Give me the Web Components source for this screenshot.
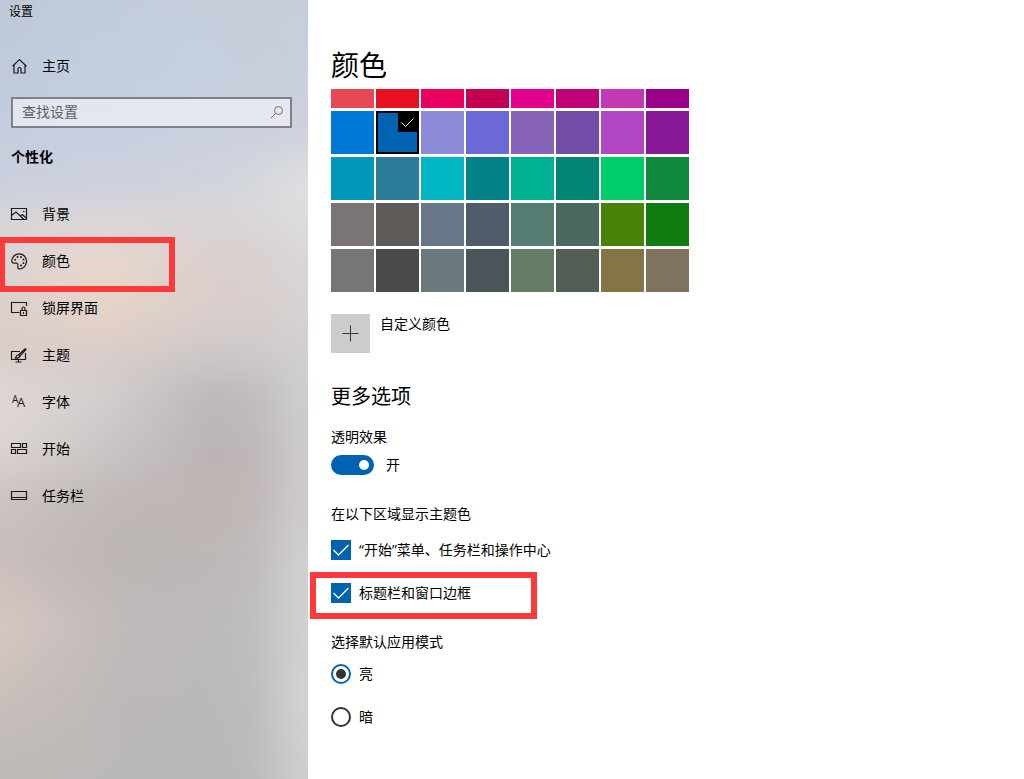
<!DOCTYPE html>
<html lang="zh-CN">
<head>
<meta charset="utf-8">
<meta name="viewport" content="width=device-width, initial-scale=1">
<title>设置</title>
<style>
  body {
    margin: 0;
    background: #fff;
    color: #000;
    font-family: "Open Sans", "Noto Sans CJK SC", sans-serif;
    font-size: 14px;
    line-height: 20px;
  }
</style>
</head>
<body>
<settings-app>
  <settings-sidebar slot="sidebar" title-text="设置">
    <nav-item icon="home">主页</nav-item>
    <search-box placeholder="查找设置"></search-box>
    <h2>个性化</h2>
    <nav-item slot="nav" icon="picture">背景</nav-item>
    <nav-item slot="nav" icon="palette" marked>颜色</nav-item>
    <nav-item slot="nav" icon="lock">锁屏界面</nav-item>
    <nav-item slot="nav" icon="theme">主题</nav-item>
    <nav-item slot="nav" icon="fonts">字体</nav-item>
    <nav-item slot="nav" icon="start">开始</nav-item>
    <nav-item slot="nav" icon="taskbar">任务栏</nav-item>
  </settings-sidebar>

  <settings-page heading="颜色">
    <color-palette selected="#0063b1"></color-palette>
    <custom-color>自定义颜色</custom-color>
    <settings-section heading="更多选项">
      <toggle-switch label="透明效果" checked>开</toggle-switch>
    </settings-section>
    <option-group label="在以下区域显示主题色">
      <check-option checked>“开始”菜单、任务栏和操作中心</check-option>
      <check-option checked marked>标题栏和窗口边框</check-option>
    </option-group>
    <radio-group label="选择默认应用模式" options="亮,暗" value="亮"></radio-group>
  </settings-page>
</settings-app>

<script>
const ICONS = {
  home: `<path d="M1.500 8.200 8.500 1.500 15.500 8.200M3 7V15H7V10.500Q7 9.500 8.500 9.500T10 10.500V15H14V7"/>`,
  picture: `<path d="M.5 2.500h15v11H.5zM.5 9.500 5 6l8 7.500M9 10.500l2.500-2 4 4"/><path d="M12 5.500h1.500"/>`,
  palette: `<path d="M.8 8.600C.6 4 4.200.8 8.200.8c4.200 0 7.300 3.300 7.300 7.500 0 4.400-3.200 7.500-6.400 7.700-1.900.1-2.600-1-2.300-2.600.3-1.500.2-2.800-1-3.300C4.100 9.600 2.600 11.600.8 8.600z"/>
    <g class="fill"><circle cx="4.200" cy="6.800" r="1"/><circle cx="6.500" cy="4" r="1"/><circle cx="10" cy="4" r="1"/><circle cx="12.500" cy="6.500" r="1"/><circle cx="12.500" cy="10" r="1"/><circle cx="10" cy="12.500" r="1"/></g>`,
  lock: `<path d="M8.500 12.500H.5v-10h15V6M9.500 10.500h6v5h-6zM11 10.500V9q0-2 1.500-2T14 9v1.500"/><path d="M12.500 12v2"/>`,
  theme: `<path d="M9 4.500H.5v8h14V6M7.500 12.500v2.500M4.500 15h6"/><path d="M15 2.500 9 9l-1.500-1L13.500 2.200q1.500-.7 1.500.3zM7.500 8q-2-.2-2.300 1.500T3.500 11q4.500.8 5.500-2"/>`,
  start: `<path d="M.5 2.500h9v4h-9zM11.500 2.500h4v4h-4zM.5 8.500h4v4h-4zM6.500 8.500h9v4h-9z"/>`,
  taskbar: `<path d="M.5 3.500h15v8H.5zM.5 9.500h15"/>`,
  fonts: `<text x="1" y="9" font-size="10">A</text><text x="6" y="13" font-size="13">A</text>`
};

// Red frame laid over a marked row
const MARK_STYLE = `
  :host([marked]) { position: relative; }
  :host([marked])::after {
    content: "";
    position: absolute;
    inset: var(--mark-inset);
    width: var(--mark-width);
    box-sizing: border-box;
    border: 6px solid #fd3a39;
    pointer-events: none;
  }
`;

class SettingsApp extends HTMLElement {
  constructor() {
    super();
    this.attachShadow({ mode: 'open' });
    this.shadowRoot.innerHTML = `
      <style>
        :host {
          display: grid;
          grid-template-columns: 308px minmax(0, 1fr);
          min-height: 100vh;
        }
      </style>
      <slot name="sidebar"></slot>
      <slot></slot>
    `;
  }
}

// Blurred wallpaper: vertical gradients blended from left to right
class AcrylicBackdrop extends HTMLElement {
  constructor() {
    super();
    this.attachShadow({ mode: 'open' });
  }

  connectedCallback() {
    const rows = [4, 11, 19, 26, 29, 35, 41, 46, 51, 57, 63, 70, 78, 87, 96];
    const columns = [
      { x: 8, colors: ['#bfc8d8', '#bfcadb', '#c5cddf', '#cbd0de', '#d7d5d9', '#dcd4d3', '#dccfcc', '#dacdc9', '#e0d9d6', '#dcd5d2', '#cdc4c2', '#c9bebb', '#d6c8c3', '#c9bfbb', '#bebab7'] },
      { x: 38, colors: ['#c3ccdb', '#c2cede', '#c7cfdf', '#ced1de', '#dad5d8', '#e9d7cb', '#e5d3c7', '#d8ccc9', '#d2cdcd', '#cac5c5', '#c0b9b8', '#bcb6b5', '#c1bbba', '#beb9b8', '#bbb9b8'] },
      { x: 65, colors: ['#c6cedc', '#c5cfde', '#cbd0de', '#d1d3dd', '#d9d5d8', '#dacfcd', '#d9cecc', '#cdc7c7', '#bbb8ba', '#bcb4b4', '#bfb5b4', '#bdb8b7', '#bcb9b9', '#bab8b8', '#b9b8b7'] },
      { x: 77, colors: ['#c7cedb', '#c6cedc', '#ccd0dd', '#d6d8dd', '#dad7d9', '#dacfcd', '#d9cecc', '#cdc8c9', '#bfbbbd', '#bfb7b7', '#c0b7b6', '#c0bbbb', '#bfbdbd', '#bdbcbc', '#bbbaba'] },
      { x: 90, colors: ['#c8cdda', '#c8cedb', '#cdd1dc', '#e0e0e2', '#dddcdd', '#d9d6d7', '#d6d2d2', '#d1ced0', '#cfcdd0', '#cccacb', '#cdcacb', '#d1cfd0', '#d2d1d2', '#d3d3d4', '#cecece'] }
    ];

    const layers = columns.map((col, i) => {
      const stops = col.colors.map((c, n) => `${c} ${rows[n]}%`).join(', ');
      const mask = i ? `linear-gradient(90deg, transparent ${columns[i - 1].x}%, #000 ${col.x}%)` : 'none';
      return `<div style="background: linear-gradient(${stops}); -webkit-mask-image: ${mask}; mask-image: ${mask}"></div>`;
    });

    this.shadowRoot.innerHTML = `
      <style>
        :host { position: absolute; inset: 0; z-index: -1; overflow: hidden; }
        section { position: absolute; inset: -30px; filter: blur(12px); }
        div { position: absolute; inset: 0; }
      </style>
      <section>${layers.join('')}</section>
    `;
  }
}

class SettingsSidebar extends HTMLElement {
  constructor() {
    super();
    this.attachShadow({ mode: 'open' });
  }

  connectedCallback() {
    this.shadowRoot.innerHTML = `
      <style>
        :host {
          display: block;
          position: relative;
          z-index: 0;
          padding-top: 4px;
        }
        header {
          margin: 0 9px 23px;
          font-size: 12px;
          line-height: 16px;
        }
        ::slotted(h2) {
          margin: 19px 11px 24px;
          font-size: 14px;
          font-weight: 700;
          line-height: 20px;
        }
        nav { display: flex; flex-direction: column; }
      </style>
      <acrylic-backdrop></acrylic-backdrop>
      <header>${this.getAttribute('title-text')}</header>
      <slot></slot>
      <nav><slot name="nav"></slot></nav>
    `;
  }
}

class NavItem extends HTMLElement {
  constructor() {
    super();
    this.attachShadow({ mode: 'open' });
  }

  connectedCallback() {
    this.shadowRoot.innerHTML = `
      <style>
        :host {
          display: block;
          --mark-inset: -1px auto -7px -1px;
          --mark-width: 176px;
        }
        a {
          display: flex;
          align-items: center;
          gap: 14px;
          height: 46px;
          padding: 0 11px 1px;
          color: inherit;
          text-decoration: none;
        }
        svg {
          flex: none;
          width: 17px;
          height: 17px;
          overflow: visible;
          fill: none;
          stroke: #1c1c1c;
          stroke-width: 1.2;
        }
        .fill, text { fill: #1c1c1c; stroke: none; }
        ${MARK_STYLE}
      </style>
      <a href="#${this.getAttribute('icon')}">
        <svg viewBox="0 0 17 17" aria-hidden="true">${ICONS[this.getAttribute('icon')]}</svg>
        <slot></slot>
      </a>
    `;
  }
}

class SearchBox extends HTMLElement {
  constructor() {
    super();
    this.attachShadow({ mode: 'open' });
  }

  connectedCallback() {
    const placeholder = this.getAttribute('placeholder') || '';
    this.shadowRoot.innerHTML = `
      <style>
        :host { display: block; margin: 7px 16px 0 11px; }
        label {
          display: flex;
          align-items: center;
          height: 31px;
          box-sizing: border-box;
          padding: 0 6px 2px 9px;
          border: 2px solid #7d818c;
          background: rgba(255, 255, 255, 0.5);
        }
        input {
          flex: 1;
          min-width: 0;
          padding: 0;
          border: 0;
          outline: none;
          background: none;
          color: #000;
          font: inherit;
        }
        input::placeholder { color: #5d6067; opacity: 1; }
        svg { width: 14px; height: 14px; fill: none; stroke: #6f737b; }
      </style>
      <label>
        <input type="text" placeholder="${placeholder}" aria-label="${placeholder}">
        <svg viewBox="0 0 14 14" aria-hidden="true"><circle cx="8.500" cy="5.500" r="4"/><path d="M5.500 8.500 1 13"/></svg>
      </label>
    `;
  }
}

class SettingsPage extends HTMLElement {
  constructor() {
    super();
    this.attachShadow({ mode: 'open' });
  }

  connectedCallback() {
    this.shadowRoot.innerHTML = `
      <style>
        :host { display: block; padding: 47px 23px 40px; }
        h1 {
          margin: 0 0 6px;
          font-size: 28px;
          font-weight: 400;
          line-height: 36px;
        }
      </style>
      <main>
        <h1>${this.getAttribute('heading')}</h1>
        <slot></slot>
      </main>
    `;
  }
}

class ColorPalette extends HTMLElement {
  constructor() {
    super();
    this.attachShadow({ mode: 'open' });
    this.colors = [
      '#e74856', '#e81123', '#ea005e', '#c30052', '#e3008c', '#bf0077', '#c239b3', '#9a0089',
      '#0078d7', '#0063b1', '#8e8cd8', '#6b69d6', '#8764b8', '#744da9', '#b146c2', '#881798',
      '#0099bc', '#2d7d9a', '#00b7c3', '#038387', '#00b294', '#018574', '#00cc6a', '#10893e',
      '#7a7574', '#5d5a58', '#68768a', '#515c6b', '#567c73', '#486860', '#498205', '#107c10',
      '#767676', '#4c4a48', '#69797e', '#4a5459', '#647c64', '#525e54', '#847545', '#7e735f'
    ];
  }

  connectedCallback() {
    const selected = this.getAttribute('selected');
    this.shadowRoot.innerHTML = `
      <style>
        :host { display: block; }
        .grid {
          display: grid;
          grid-template-columns: repeat(8, 43px);
          grid-template-rows: 19px;
          grid-auto-rows: 43px;
          gap: 3px 2px;
        }
        label { display: grid; background: var(--swatch); }
        input { appearance: none; margin: 0; grid-area: 1 / 1; }
        svg { display: none; }
        input:checked { border: 2px solid #000; }
        input:checked + svg {
          display: block;
          grid-area: 1 / 1;
          justify-self: end;
          width: 21px;
          height: 21px;
          background: #000;
          fill: none;
          stroke: #fff;
        }
      </style>
      <div class="grid" role="radiogroup">
        ${this.colors.map(c => `
          <label style="--swatch: ${c}">
            <input type="radio" name="accent" value="${c}" aria-label="${c}" ${c === selected ? 'checked' : ''}>
            <svg viewBox="0 0 21 21" aria-hidden="true"><path d="M3.500 11.500 7.500 15.500 15.500 7.500"/></svg>
          </label>`).join('')}
      </div>
    `;
  }
}

class CustomColor extends HTMLElement {
  constructor() {
    super();
    this.attachShadow({ mode: 'open' });
    this.shadowRoot.innerHTML = `
      <style>
        :host { display: block; margin-top: 22px; }
        button {
          display: flex;
          align-items: flex-start;
          gap: 10px;
          padding: 0;
          border: 0;
          background: none;
          color: inherit;
          font: inherit;
        }
        svg { width: 39px; height: 39px; background: #ccc; stroke: #333; }
      </style>
      <button type="button">
        <svg viewBox="0 0 39 39" aria-hidden="true"><path d="M11.500 19.500h16M19.500 11.500v16"/></svg>
        <slot></slot>
      </button>
    `;
  }
}

class SettingsSection extends HTMLElement {
  constructor() {
    super();
    this.attachShadow({ mode: 'open' });
  }

  connectedCallback() {
    this.shadowRoot.innerHTML = `
      <style>
        :host { display: block; margin-top: 30px; }
        h2 {
          margin: 0 0 16px;
          font-size: 20px;
          font-weight: 400;
          line-height: 28px;
        }
      </style>
      <h2>${this.getAttribute('heading')}</h2>
      <slot></slot>
    `;
  }
}

class ToggleSwitch extends HTMLElement {
  constructor() {
    super();
    this.attachShadow({ mode: 'open' });
  }

  connectedCallback() {
    this.shadowRoot.innerHTML = `
      <style>
        :host { display: flex; flex-direction: column; gap: 8px; }
        .row { display: flex; align-items: center; gap: 12px; }
        input {
          appearance: none;
          display: flex;
          align-items: center;
          width: 43px;
          height: 20px;
          box-sizing: border-box;
          margin: 0;
          padding: 0 5px;
          border: 2px solid #333;
          border-radius: 10px;
        }
        input::before {
          content: "";
          width: 10px;
          height: 10px;
          border-radius: 50%;
          background: #333;
        }
        input:checked {
          justify-content: flex-end;
          padding: 0 3px;
          border-color: #0063b1;
          background: #0063b1;
        }
        input:checked::before { background: #fff; }
      </style>
      <label for="switch">${this.getAttribute('label')}</label>
      <div class="row">
        <input id="switch" type="checkbox" role="switch" ${this.hasAttribute('checked') ? 'checked' : ''}>
        <slot></slot>
      </div>
    `;
  }
}

class OptionGroup extends HTMLElement {
  constructor() {
    super();
    this.attachShadow({ mode: 'open' });
  }

  connectedCallback() {
    this.shadowRoot.innerHTML = `
      <style>
        :host { display: block; margin-top: 29px; }
        .options {
          display: flex;
          flex-direction: column;
          align-items: flex-start;
          gap: 23px;
          margin-top: 16px;
        }
      </style>
      <div id="title">${this.getAttribute('label')}</div>
      <div class="options" role="group" aria-labelledby="title"><slot></slot></div>
    `;
  }
}

class CheckOption extends HTMLElement {
  constructor() {
    super();
    this.attachShadow({ mode: 'open' });
  }

  connectedCallback() {
    this.shadowRoot.innerHTML = `
      <style>
        :host {
          display: block;
          --mark-inset: -11px auto -16px -21px;
          --mark-width: 227px;
        }
        label { display: flex; align-items: center; gap: 8px; }
        .box { display: grid; width: 20px; height: 20px; }
        input {
          appearance: none;
          grid-area: 1 / 1;
          margin: 0;
          border: 2px solid #333;
        }
        input:checked { border-color: #0063b1; background: #0063b1; }
        svg {
          display: none;
          grid-area: 1 / 1;
          fill: none;
          stroke: #fff;
          stroke-width: 1.3;
          pointer-events: none;
        }
        input:checked + svg { display: block; }
        ${MARK_STYLE}
      </style>
      <label>
        <span class="box">
          <input type="checkbox" ${this.hasAttribute('checked') ? 'checked' : ''}>
          <svg viewBox="0 0 20 20" aria-hidden="true"><path d="M2.500 10 7.500 15 17.500 5"/></svg>
        </span>
        <slot></slot>
      </label>
    `;
  }
}

class RadioGroup extends HTMLElement {
  constructor() {
    super();
    this.attachShadow({ mode: 'open' });
  }

  connectedCallback() {
    const options = (this.getAttribute('options') || '').split(',');
    const value = this.getAttribute('value');
    this.shadowRoot.innerHTML = `
      <style>
        :host { display: block; margin-top: 29px; }
        .options {
          display: flex;
          flex-direction: column;
          align-items: flex-start;
          gap: 23px;
          margin-top: 12px;
        }
        label { display: flex; align-items: center; gap: 8px; }
        input {
          appearance: none;
          display: grid;
          place-items: center;
          width: 20px;
          height: 20px;
          box-sizing: border-box;
          margin: 0;
          border: 2px solid #333;
          border-radius: 50%;
        }
        input:checked { border-color: #0063b1; }
        input:checked::before {
          content: "";
          width: 10px;
          height: 10px;
          border-radius: 50%;
          background: #333;
        }
      </style>
      <div id="title">${this.getAttribute('label')}</div>
      <div class="options" role="radiogroup" aria-labelledby="title">
        ${options.map(o => `<label><input type="radio" name="mode" value="${o}" ${o === value ? 'checked' : ''}>${o}</label>`).join('')}
      </div>
    `;
  }
}

customElements.define('settings-app', SettingsApp);
customElements.define('acrylic-backdrop', AcrylicBackdrop);
customElements.define('settings-sidebar', SettingsSidebar);
customElements.define('nav-item', NavItem);
customElements.define('search-box', SearchBox);
customElements.define('settings-page', SettingsPage);
customElements.define('color-palette', ColorPalette);
customElements.define('custom-color', CustomColor);
customElements.define('settings-section', SettingsSection);
customElements.define('toggle-switch', ToggleSwitch);
customElements.define('option-group', OptionGroup);
customElements.define('check-option', CheckOption);
customElements.define('radio-group', RadioGroup);
</script>
</body>
</html>
